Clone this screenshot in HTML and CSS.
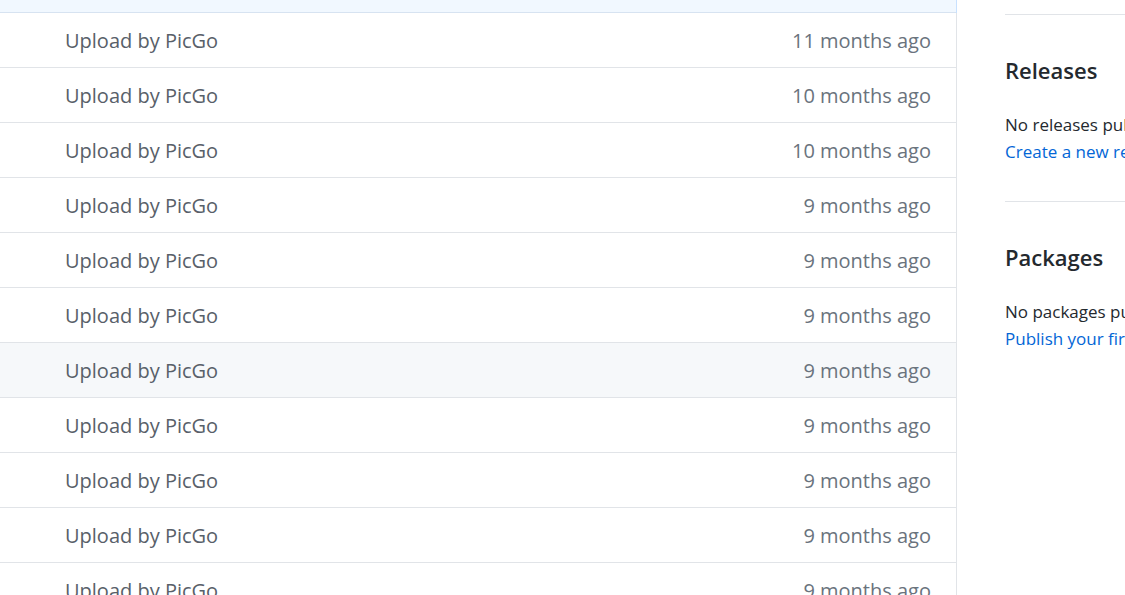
FILE: index.html
```html
<!DOCTYPE html>
<html>
<head>
<meta charset="utf-8">
<link rel="stylesheet" href="styles.css">
</head>
<body>
<div class="page">
  <div class="files">
    <div class="files-head"></div>
    <div class="row"><span class="msg">Upload by PicGo</span><span class="age">11 months ago</span></div>
    <div class="row"><span class="msg">Upload by PicGo</span><span class="age">10 months ago</span></div>
    <div class="row"><span class="msg">Upload by PicGo</span><span class="age">10 months ago</span></div>
    <div class="row"><span class="msg">Upload by PicGo</span><span class="age">9 months ago</span></div>
    <div class="row"><span class="msg">Upload by PicGo</span><span class="age">9 months ago</span></div>
    <div class="row"><span class="msg">Upload by PicGo</span><span class="age">9 months ago</span></div>
    <div class="row hover"><span class="msg">Upload by PicGo</span><span class="age">9 months ago</span></div>
    <div class="row"><span class="msg">Upload by PicGo</span><span class="age">9 months ago</span></div>
    <div class="row"><span class="msg">Upload by PicGo</span><span class="age">9 months ago</span></div>
    <div class="row"><span class="msg">Upload by PicGo</span><span class="age">9 months ago</span></div>
    <div class="row"><span class="msg">Upload by PicGo</span><span class="age">9 months ago</span></div>
  </div>
  <aside class="sidebar">
    <section class="box">
      <h2 class="box-title">Releases</h2>
      <div class="box-text">No releases published</div>
      <a class="box-link" href="#">Create a new release</a>
    </section>
    <section class="box">
      <h2 class="box-title">Packages</h2>
      <div class="box-text">No packages published</div>
      <a class="box-link" href="#">Publish your first package</a>
    </section>
  </aside>
</div>
</body>
</html>
```
FILE: styles.css
```css
html, body {
  margin: 0;
  padding: 0;
  background: #ffffff;
  overflow: hidden;
}
body {
  font-family: "Open Sans", "Noto Sans", "Liberation Sans", sans-serif;
  color: #24292e;
}
.page {
  display: flex;
  align-items: flex-start;
  gap: 48px;
  width: 1125px;
  height: 595px;
  overflow: hidden;
}
.files {
  flex: 0 0 956px;
  width: 956px;
  border-right: 1px solid #e1e4e8;
  min-height: 595px;
}
.files-head {
  height: 12px;
  background: #f1f8ff;
  border-bottom: 1px solid #d7e3f1;
  box-shadow: 1px 0 0 #c8e1ff;
}
.row {
  display: flex;
  align-items: center;
  justify-content: space-between;
  box-sizing: border-box;
  height: 55px;
  border-bottom: 1px solid #e1e4e8;
  padding: 1px 25px 0 65px;
  font-size: 20px;
  color: #586069;
}
.row.hover {
  background: #f6f8fa;
}
.age {
  color: #6a737d;
}
.sidebar {
  flex: 1 0 auto;
  white-space: nowrap;
  margin-top: 14px;
}
.box {
  border-top: 1px solid #e1e4e8;
  padding: 40px 0 36px;
}
.box-title {
  margin: 0 0 26px;
  font-size: 22px;
  font-weight: 600;
  line-height: 30px;
  color: #24292e;
}
.box-text {
  font-size: 17px;
  line-height: 27px;
  color: #24292e;
}
.box-link {
  display: block;
  font-size: 17px;
  line-height: 27px;
  color: #0366d6;
  text-decoration: none;
}
```
